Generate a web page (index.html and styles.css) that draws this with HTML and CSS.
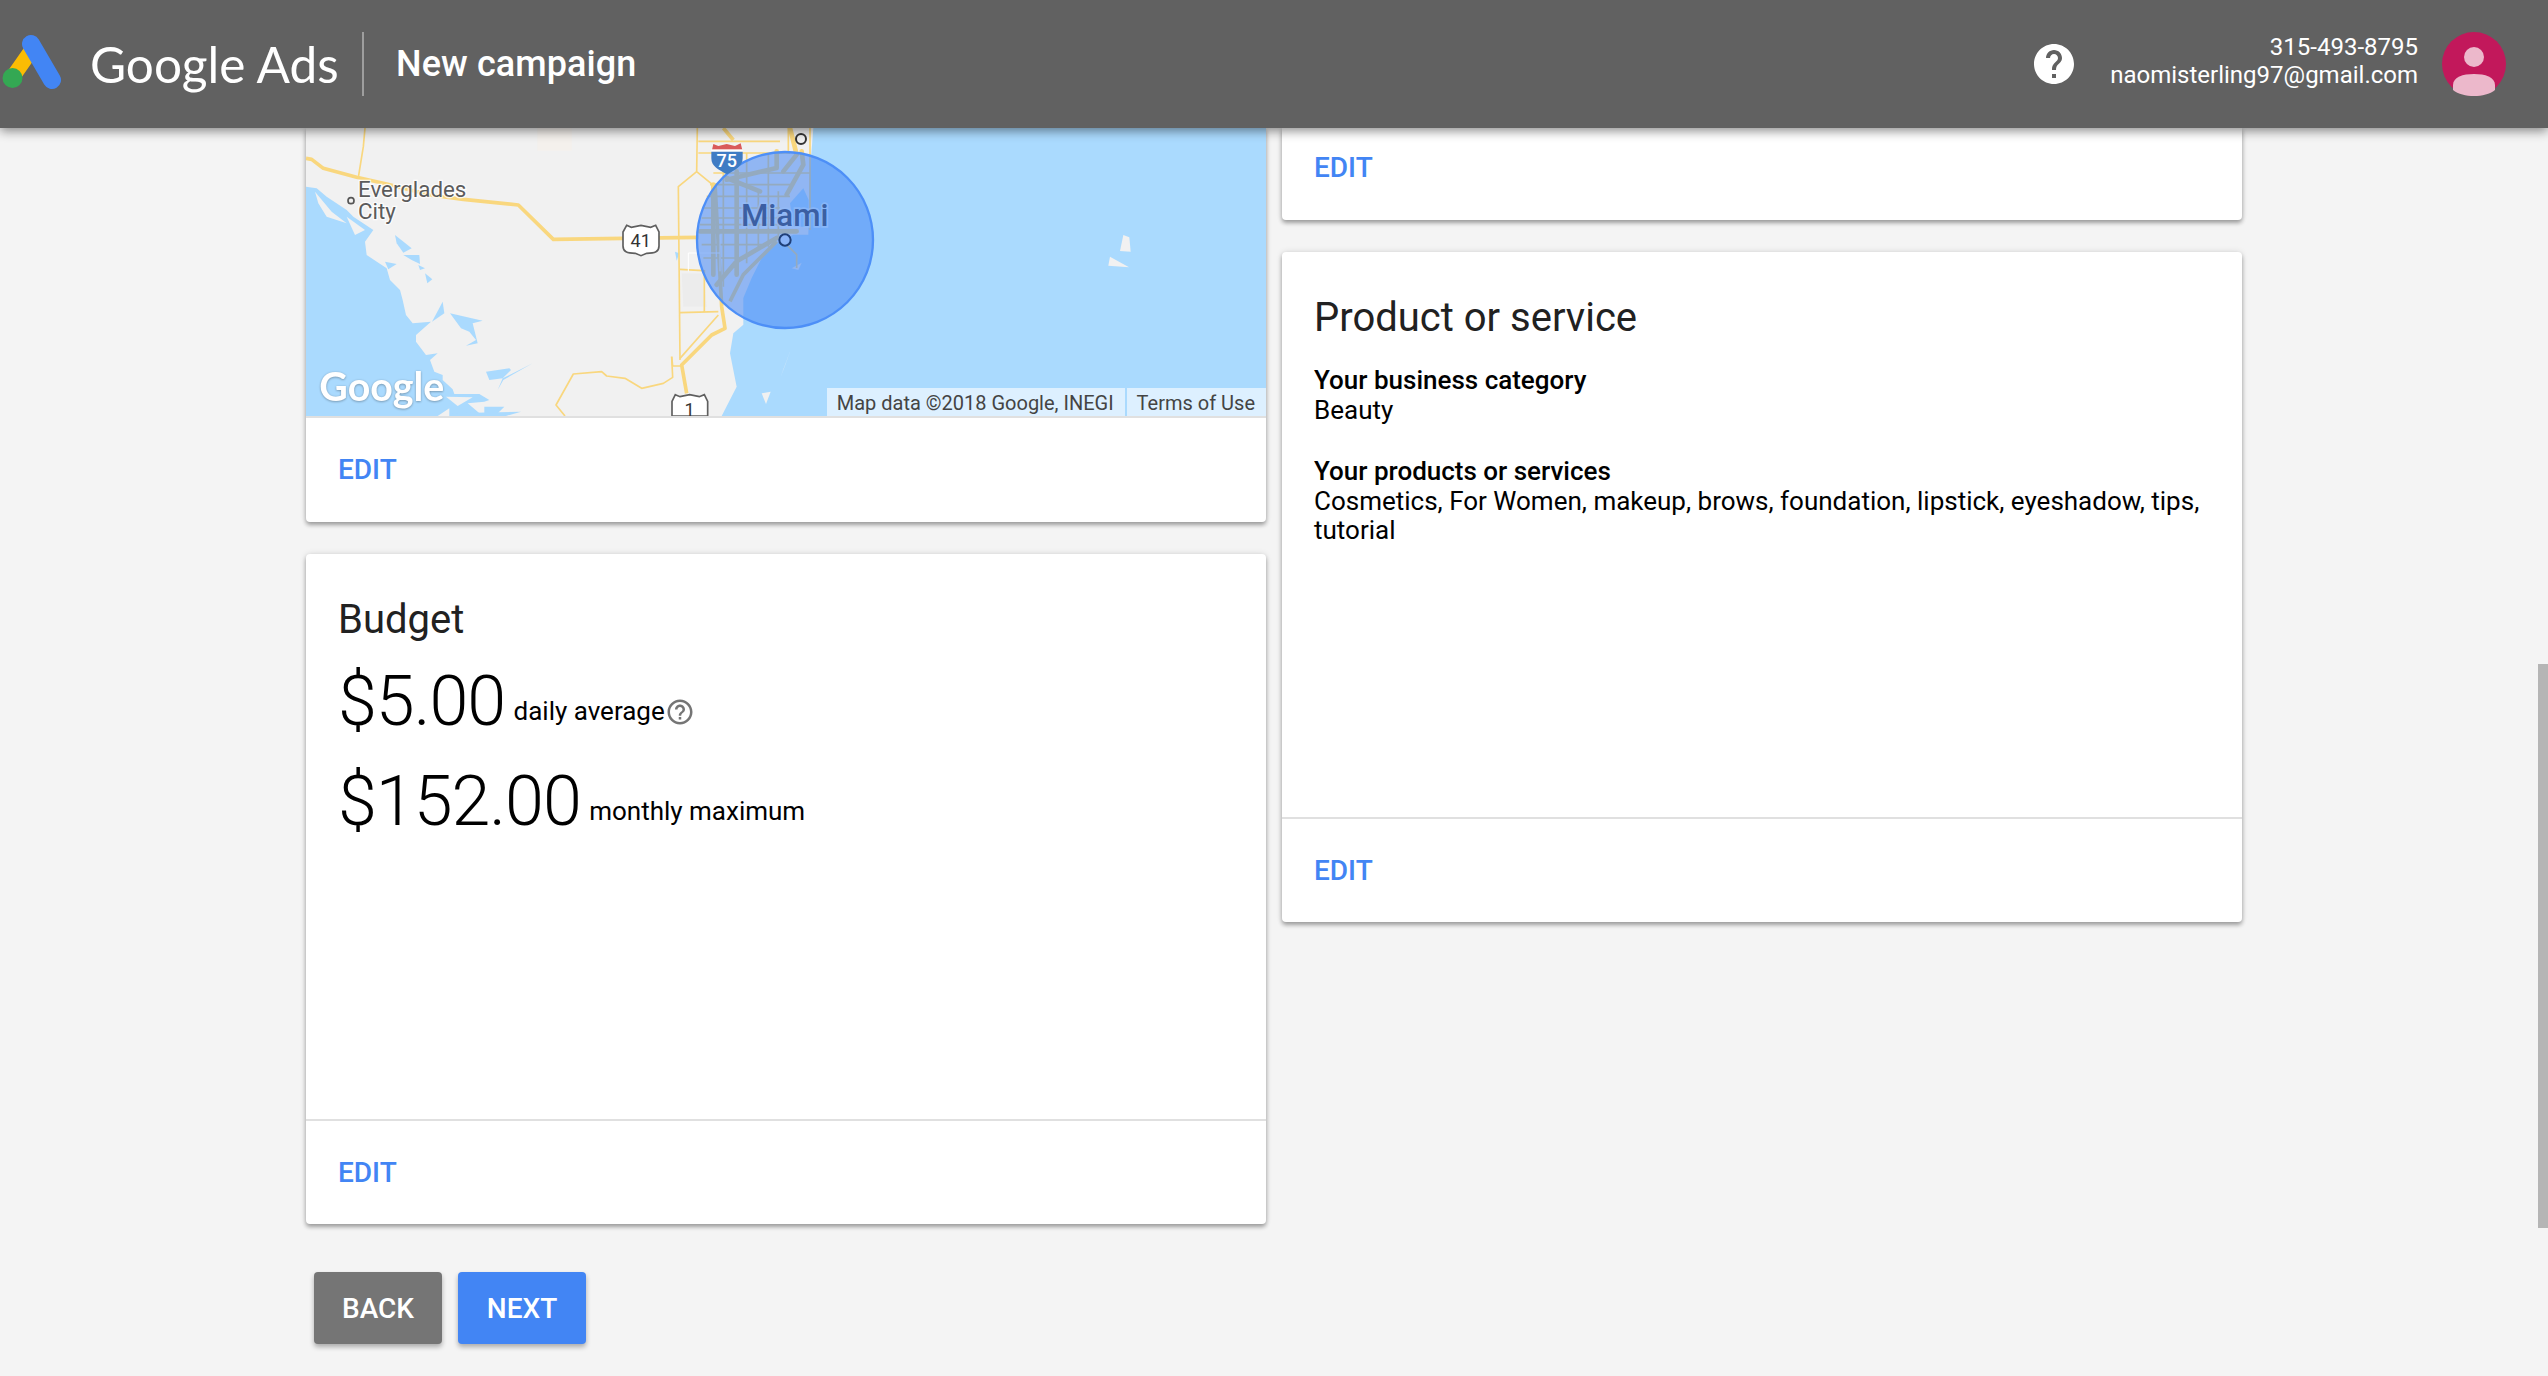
FILE: index.html
```html
<!DOCTYPE html>
<html lang="en">
<head>
  <meta charset="UTF-8" />
  <meta name="viewport" content="width=device-width, initial-scale=1.0"/>
  <title>Google Ads - New campaign</title>
  <link rel="stylesheet" href="styles.css">
</head>
<body>
  <header class="topbar">
    <svg class="ads-logo" viewBox="0 0 64 64" width="64" height="64">
      <line class="logo-yellow" x1="33" y1="17" x2="12" y2="47"/>
      <line class="logo-blue" x1="31" y1="13" x2="52" y2="49"/>
      <circle class="logo-green" cx="12.5" cy="47" r="10"/>
    </svg>
    <span class="brand">Google Ads</span>
    <span class="topbar-divider"></span>
    <span class="page-title">New campaign</span>
    <span class="spacer"></span>
    <svg class="help-icon" viewBox="0 0 24 24" width="48" height="48">
      <path d="M12 2C6.48 2 2 6.48 2 12s4.48 10 10 10 10-4.48 10-10S17.52 2 12 2zm1 17h-2v-2h2v2zm2.07-7.75l-.9.92C13.45 12.9 13 13.5 13 15h-2v-.5c0-1.1.45-2.1 1.17-2.83l1.24-1.26c.37-.36.59-.86.59-1.41 0-1.1-.9-2-2-2s-2 .9-2 2H8c0-2.21 1.79-4 4-4s4 1.79 4 4c0 .88-.36 1.68-.93 2.25z"/>
    </svg>
    <div class="account">
      <div>315-493-8795</div>
      <div>naomisterling97@gmail.com</div>
    </div>
    <svg class="avatar" viewBox="0 0 64 64" width="64" height="64">
      <circle class="avatar-bg" cx="32" cy="32" r="32"/>
      <circle class="avatar-fg" cx="32" cy="25" r="10"/>
      <path class="avatar-fg" d="M11 53c0-8 10-11 21-11s21 3 21 11v5c-5 4-13 6-21 6s-16-2-21-6z"/>
    </svg>
  </header>

  <main class="columns">
    <div class="column">
      <section class="card">
        <div class="map">
          <svg class="map-svg" viewBox="48 24 2880 864" width="960" height="288">
            <!-- land and water, numbers are 3x page pixels -->
            <polygon class="land" points="48,24 1570,24 1560,154 1555,344 1510,344 1470,364 1420,404 1385,474 1360,534 1360,614 1330,640 1320,700 1340,800 1295,888 48,888"/>
            <polygon class="land-warm" points="742,24 845,24 845,92 742,92"/>
            <polygon class="land-urban" points="1175,460 1240,460 1250,560 1180,560"/>
            <polygon class="water" points="48,200 80,205 110,230 170,270 190,290 250,330 225,365 230,405 290,445 300,480 330,510 338,540 348,585 368,610 423,605 378,645 378,665 408,705 443,700 420,720 433,755 458,765 458,780 488,808 493,822 568,822 598,840 583,845 533,850 578,888 48,888"/>
            <polygon class="water" points="315,345 365,385 340,398 320,370"/>
            <polygon class="water" points="340,405 388,405 390,432 365,420"/>
            <polygon class="water" points="385,435 405,445 390,450"/>
            <polygon class="water" points="285,425 320,432 295,448"/>
            <polygon class="water" points="405,460 427,478 412,490"/>
            <polygon class="water" points="426,605 458,545 463,580"/>
            <polygon class="water" points="480,580 578,602 548,610 563,670 528,677 558,660 538,635 513,625"/>
            <polygon class="water" points="588,755 658,745 663,750 638,775 728,730 640,780 623,810 638,775 598,780"/>
            <polygon class="water" points="583,860 643,860 618,885 583,888"/>
            <polygon class="water" points="478,880 693,875 648,888 478,888"/>
            <polygon class="water" points="1155,395 1168,400 1160,422"/>
            <polygon class="water" points="1500,250 1540,205 1556,240 1556,320 1510,320"/>
            <polygon class="land" points="75,215 125,275 170,310 110,290 85,250"/>
            <polygon class="land" points="170,290 225,330 195,345"/>
            <polygon class="land" points="468,830 548,832 503,858"/>
            <polygon class="land" points="443,888 478,865 478,888"/>
            <polygon class="land" points="1415,820 1442,815 1428,852"/>
            <polygon class="land" points="1470,775 1500,695 1482,745"/>
            <polygon class="land" points="2500,345 2518,352 2522,395 2490,393"/>
            <polygon class="land" points="2460,410 2517,442 2455,437"/>
            <polygon class="land" points="1505,445 1535,428 1525,450"/>

            <!-- roads -->
            <path class="road" d="M48 115L65 118L100 145L200 172L290 192L420 225L520 238L685 255L790 358L1000 355L1225 352"/>
            <path class="road-thin" d="M225 24L220 80L205 172"/>
            <path class="road-thin" d="M1222 24L1220 155L1165 200L1170 720M1220 155L1275 200"/>
            <path class="road" d="M1300 24L1330 60M1275 190L1295 560L1305 625L1265 645L1175 735L1190 820"/>
            <path class="road-thin" d="M1285 585L1170 715M1145 710L1148 738L1175 738"/>
            <path class="road-thin" d="M825 888L798 855L850 762L935 755L950 768L1005 775L1055 805L1120 790L1148 772L1145 710"/>
            <path class="road-thin" d="M1170 578L1285 575M1243 450V578M1170 448L1240 452"/>
            <path class="road-thin" d="M1225 64H1470M1225 99H1500M1270 159H1560M1260 194H1500M1250 229H1500M1240 264H1470M1235 294H1470M1230 314H1470M1235 374H1420M1240 414H1370M1300 100V500M1370 100V430M1405 214V390M1435 100V380M1465 214V350M1495 24V100"/>
            <path class="road-thick" d="M1340 154V464M1270 194V464M1230 334H1520M1280 494L1340 424L1460 354M1310 174L1410 214M1310 179L1460 144V94M1480 154L1520 104L1500 24M1490 224L1540 134L1535 94"/>
            <path class="road" d="M1320 544L1360 464L1460 364"/>
            <path class="road-thin" d="M1490 374L1520 404L1520 444M1560 24V330"/>
            <path class="road-white" d="M1290 399H1195V454M1290 344V454"/>

            <circle class="radius" cx="1485" cy="360" r="264"/>

            <!-- shields -->
            <path class="shield-us" d="M1010 316L1024 322L1053 316L1082 322L1097 316L1107 336L1107 378C1107 395 1095 400 1070 400L1053 407L1036 400C1011 400 999 395 999 378V336z"/>
            <text class="shield-num" x="1052" y="380">41</text>
            <path class="shield-us" d="M1156 824L1170 830L1199 824L1228 830L1243 824L1253 844L1253 888L1146 888V844z"/>
            <text class="shield-num" x="1199" y="888">1</text>
            <path class="shield-red" d="M1266 90L1270 72L1285 78L1310 72L1335 78L1352 70L1357 90z"/>
            <rect class="shield-white" x="1264" y="88" width="94" height="7"/>
            <path class="shield-blue" d="M1264 95H1358V115C1358 140 1335 150 1311 163C1287 150 1264 140 1264 115z"/>
            <text class="shield-top" x="1310" y="141">75</text>

            <!-- labels -->
            <circle class="dot-small" cx="183" cy="242" r="9"/>
            <text class="place" x="204" y="232">Everglades</text>
            <text class="place" x="204" y="298">City</text>
            <text class="city" x="1484" y="318">Miami</text>
            <circle class="dot-city" cx="1485" cy="360" r="17"/>
            <circle class="dot-north" cx="1533" cy="57" r="15"/>
            <text class="map-google" x="88" y="844">Google</text>
          </svg>
          <div class="map-credits">
            <span class="credit">Map data ©2018 Google, INEGI</span>
            <span class="credit">Terms of Use</span>
          </div>
        </div>
        <div class="card-footer"><a class="edit-link">EDIT</a></div>
      </section>

      <section class="card tall">
        <div class="card-body">
          <h2 class="card-title budget-title">Budget</h2>
          <div class="amount-row first">
            <span class="amount">$5.00</span>
            <span class="amount-note">daily average</span><svg class="small-help" viewBox="0 0 24 24" width="30" height="30">
              <path d="M11 18h2v-2h-2v2zm1-16C6.48 2 2 6.48 2 12s4.48 10 10 10 10-4.48 10-10S17.52 2 12 2zm0 18c-4.41 0-8-3.59-8-8s3.59-8 8-8 8 3.59 8 8-3.59 8-8 8zm0-14c-2.21 0-4 1.79-4 4h2c0-1.1.9-2 2-2s2 .9 2 2c0 2-3 1.75-3 5h2c0-2.25 3-2.5 3-5 0-2.21-1.79-4-4-4z"/>
            </svg>
          </div>
          <div class="amount-row">
            <span class="amount">$152.00</span>
            <span class="amount-note">monthly maximum</span>
          </div>
        </div>
        <div class="card-footer lined"><a class="edit-link">EDIT</a></div>
      </section>

      <div class="actions">
        <button class="btn btn-back">BACK</button>
        <button class="btn btn-next">NEXT</button>
      </div>
    </div>

    <div class="column">
      <section class="card">
        <div class="card-footer short"><a class="edit-link">EDIT</a></div>
      </section>

      <section class="card tall">
        <div class="card-body">
          <h2 class="card-title">Product or service</h2>
          <div class="detail">
            <div class="detail-label">Your business category</div>
            <div>Beauty</div>
          </div>
          <div class="detail">
            <div class="detail-label">Your products or services</div>
            <div>Cosmetics, For Women, makeup, brows, foundation, lipstick, eyeshadow, tips, tutorial</div>
          </div>
        </div>
        <div class="card-footer lined"><a class="edit-link">EDIT</a></div>
      </section>
    </div>
  </main>

  <div class="scroll-thumb"></div>
</body>
</html>
```

FILE: styles.css
```css
* {
  box-sizing: border-box;
}

html, body {
  height: 100%;
}

body {
  margin: 0;
  overflow: hidden;
  background-color: #f4f4f4;
  font-family: Roboto, "Liberation Sans", sans-serif;
  font-size: 26px;
  line-height: 29.6px;
  color: #000;
}

/* top bar */
.topbar {
  position: relative;
  z-index: 2;
  display: flex;
  align-items: center;
  height: 128px;
  padding-right: 42px;
  background-color: #616161;
  color: #fff;
  box-shadow: 0 3px 10px rgba(0,0,0,0.45);
}

.ads-logo {
  flex: none;
  margin-right: 26px;
  margin-top: -3px;
}

.logo-yellow {
  stroke: #fbbc04;
  stroke-width: 15;
  stroke-linecap: round;
}

.logo-blue {
  stroke: #4285f4;
  stroke-width: 18;
  stroke-linecap: round;
}

.logo-green {
  fill: #34a853;
}

.brand {
  width: 272px;
  font-family: Lato, sans-serif;
  font-size: 49.5px;
  line-height: 64px;
  white-space: nowrap;
}

.topbar-divider {
  width: 2px;
  height: 64px;
  background-color: #9e9e9e;
}

.page-title {
  margin-left: 32px;
  font-size: 36px;
  font-weight: 500;
  letter-spacing: 0.1px;
  line-height: 44px;
}

.spacer {
  flex: 1;
}

.help-icon {
  flex: none;
  fill: #fff;
  margin-right: 32px;
}

.account {
  margin-top: -6px;
  text-align: right;
  font-size: 24px;
  line-height: 28px;
  margin-right: 24px;
}

.avatar {
  flex: none;
}

.avatar-bg {
  fill: #c2185b;
}

.avatar-fg {
  fill: #ecb8cb;
}

/* page columns */
.columns {
  display: flex;
  gap: 16px;
  padding-left: 306px;
}

.column {
  width: 960px;
}

.card {
  margin-bottom: 32px;
  background-color: #fff;
  border-radius: 0 0 4px 4px;
  box-shadow: 0 3px 4px rgba(0,0,0,0.32), 0 0 6px rgba(0,0,0,0.12);
}

.card.tall {
  display: flex;
  flex-direction: column;
  height: 670px;
  border-radius: 4px;
}

.card-body {
  flex: 1;
  padding: 41px 32px 0;
}

.card-title {
  margin: 0 0 23px;
  font-size: 40px;
  font-weight: 400;
  line-height: 50px;
  color: #212121;
}

.budget-title {
  margin-bottom: 0;
}

.card-footer {
  display: flex;
  align-items: center;
  height: 104px;
  padding: 0 32px;
}

.card-footer.lined {
  height: 105px;
  border-top: 2px solid #e0e0e0;
}

.card-footer.short {
  height: 92px;
  padding-bottom: 13px;
}

.edit-link {
  font-size: 28px;
  font-weight: 500;
  color: #4285f4;
}

/* budget */
.amount-row {
  height: 72px;
  margin-top: 28px;
  line-height: 72px;
  white-space: nowrap;
}

.amount-row.first {
  margin-top: 20px;
}

.amount {
  font-size: 70px;
  font-weight: 300;
  letter-spacing: -1px;
  margin-right: 2px;
}

.amount-note {
  vertical-align: 5px;
}

.small-help {
  fill: #757575;
  vertical-align: -2px;
}

.detail {
  margin-bottom: 32px;
}

.detail-label {
  font-weight: 500;
}

/* buttons */
.actions {
  display: flex;
  gap: 16px;
  margin-top: 48px;
  padding-left: 8px;
}

.btn {
  width: 128px;
  height: 72px;
  border: none;
  border-radius: 4px;
  font-family: inherit;
  font-size: 28px;
  font-weight: 500;
  color: #fff;
  box-shadow: 0 3px 5px rgba(0,0,0,0.3);
}

.btn-back {
  background-color: #757575;
}

.btn-next {
  background-color: #4285f4;
}

/* map */
.map {
  position: relative;
  height: 290px;
  border-bottom: 2px solid #e0e0e0;
  background-color: #aadafe;
}

.map-svg {
  display: block;
}

.land {
  fill: #f1f1f1;
}

.land-warm {
  fill: #f4f0ec;
}

.land-urban {
  fill: #ececec;
}

.water {
  fill: #aadafe;
}

.road, .road-thin, .road-thick, .road-white {
  fill: none;
  stroke: #f9d77e;
  stroke-linejoin: round;
}

.road {
  stroke-width: 11;
}

.road-thin {
  stroke-width: 5;
}

.road-thick {
  stroke-width: 14;
  stroke-linecap: round;
}

.road-white {
  stroke: #fff;
  stroke-width: 3;
}

.radius {
  fill: #4285f4;
  fill-opacity: 0.55;
  stroke: #4d8ff7;
  stroke-width: 7;
}

.shield-us {
  fill: #fff;
  stroke: #5f5f5f;
  stroke-width: 5;
}

.shield-num {
  font-size: 54px;
  fill: #333;
  text-anchor: middle;
}

.shield-red {
  fill: #d9595a;
}

.shield-white {
  fill: #fff;
}

.shield-blue {
  fill: #3f7cc4;
}

.shield-top {
  font-size: 54px;
  font-weight: 500;
  fill: #fff;
  text-anchor: middle;
}

.place {
  font-size: 67px;
  fill: #5b5b5b;
  stroke: rgba(255,255,255,0.8);
  stroke-width: 8;
  paint-order: stroke;
}

.city {
  font-size: 94px;
  font-weight: 500;
  fill: #3b5fa3;
  stroke: rgba(150,190,250,0.6);
  stroke-width: 10;
  paint-order: stroke;
  text-anchor: middle;
}

.dot-small {
  fill: #f1f1f1;
  stroke: #555;
  stroke-width: 5;
}

.dot-city {
  fill: #8ab4f8;
  stroke: #1f3f78;
  stroke-width: 6;
}

.dot-north {
  fill: #f1f1f1;
  stroke: #333;
  stroke-width: 6;
}

.map-google {
  font-family: Lato, sans-serif;
  font-size: 118px;
  font-weight: 700;
  fill: #fff;
  filter: drop-shadow(0 2px 3px rgba(0,0,0,0.35));
}

.map-credits {
  position: absolute;
  right: 0;
  bottom: 0;
  display: flex;
  gap: 2px;
}

.credit {
  height: 28px;
  padding: 0 11px 0 10px;
  background-color: rgba(255,255,255,0.6);
  font-size: 20px;
  line-height: 30px;
  color: #444;
}

.scroll-thumb {
  position: absolute;
  top: 664px;
  right: 0;
  width: 10px;
  height: 564px;
  background-color: #b5b5b5;
}
```
